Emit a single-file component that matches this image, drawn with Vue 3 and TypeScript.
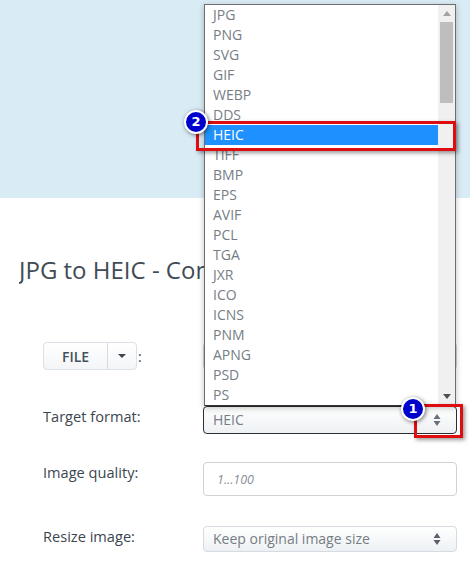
<script setup lang="ts">
const formats: string[] = ['JPG','PNG','SVG','GIF','WEBP','DDS','HEIC','TIFF','BMP','EPS','AVIF','PCL','TGA','JXR','ICO','ICNS','PNM','APNG','PSD','PS']
</script>

<template>
  <div class="page">
    <div class="hero"></div>
    <h1 class="title">JPG to HEIC - Convert</h1>
    <form class="form" @submit.prevent>
      <div class="row row-file">
        <div class="label-file">
          <div class="btn-group">
            <button type="button" class="btn-file">FILE</button>
            <button type="button" class="btn-caret"><span class="caret"></span></button>
          </div>
          <span class="colon">:</span>
        </div>
        <div class="file-box"></div>
      </div>
      <div class="row row-target">
        <label class="label">Target format:</label>
        <div class="select select-active">
          <span>HEIC</span>
          <svg class="updown" width="8" height="14" viewBox="0 0 8 14"><path d="M4 1 7.5 6H.5zM4 13 .5 8h7z" fill="#6b7179"/></svg>
        </div>
      </div>
      <div class="row row-quality">
        <label class="label">Image quality:</label>
        <div class="input"><em>1...100</em></div>
      </div>
      <div class="row row-resize">
        <label class="label">Resize image:</label>
        <div class="select">
          <span>Keep original image size</span>
          <svg class="updown" width="8" height="14" viewBox="0 0 8 14"><path d="M4 1 7.5 6H.5zM4 13 .5 8h7z" fill="#5b6169"/></svg>
        </div>
      </div>
    </form>

    <div class="dropdown">
      <ul class="options">
        <li v-for="f in formats" :key="f" :class="{ selected: f === 'HEIC' }">{{ f }}</li>
      </ul>
      <div class="scrollbar">
        <svg class="arrow" width="8" height="5" viewBox="0 0 8 5"><path d="M4 0 8 5H0z" fill="#a3a3a3"/></svg>
        <div class="track"><div class="thumb"></div></div>
        <svg class="arrow" width="8" height="5" viewBox="0 0 8 5"><path d="M0 0h8L4 5z" fill="#505050"/></svg>
      </div>
    </div>

    <div class="mark mark-option"></div>
    <div class="mark mark-arrow"></div>
    <div class="badge badge-two">2</div>
    <div class="badge badge-one">1</div>
  </div>
</template>

<style>
html, body { margin: 0; background: #fff; }
</style>

<style scoped>
.page {
  position: relative;
  width: 470px;
  height: 563px;
  overflow: hidden;
  background: #fff;
  font-family: "Open Sans", "Liberation Sans", sans-serif;
  color: #3d4650;
}
.hero { height: 198px; background: #d9ebf5; }
.title {
  margin: 55px 0 0 19px;
  width: 185px;
  overflow: hidden;
  font-size: 24px;
  line-height: 34px;
  font-weight: 400;
  color: #414b55;
  white-space: nowrap;
}
.form { margin: 0 13px 0 43px; padding-top: 55px; }
.row {
  display: grid;
  grid-template-columns: 160px 254px;
  align-items: center;
}
.row-file { height: 28px; }
.row-target { margin-top: 36px; height: 25px; }
.row-quality { margin-top: 31px; height: 33px; }
.row-resize { margin-top: 31px; height: 26px; }
.label { font-size: 14.6px; line-height: 20px; color: #3d4650; }
.row-target .label { padding-bottom: 8px; }
.row-quality .label { padding-bottom: 14px; }
.row-resize .label { padding-bottom: 6px; }
.label-file { display: flex; align-items: center; }
.btn-group {
  display: flex;
  height: 28px;
  box-sizing: border-box;
  border: 1px solid #dbe1e6;
  border-radius: 4px;
  background: linear-gradient(#fff, #f3f5f7);
}
.btn-file {
  width: 64px;
  border: 0;
  border-right: 1px solid #d5dbe0;
  background: none;
  padding: 0;
  font: 600 14px "Open Sans", sans-serif;
  color: #46505a;
}
.btn-caret {
  width: 28px;
  border: 0;
  padding: 0;
  background: none;
  display: flex;
  align-items: center;
  justify-content: center;
}
.caret {
  width: 0;
  height: 0;
  border-left: 4px solid transparent;
  border-right: 4px solid transparent;
  border-top: 4px solid #3d4650;
}
.colon { font-size: 14px; margin-left: 1px; color: #3d4650; }
.file-box {
  height: 28px;
  box-sizing: border-box;
  border: 1px solid #cfd5da;
  border-radius: 4px;
}
.select {
  box-sizing: border-box;
  height: 100%;
  display: flex;
  align-items: center;
  justify-content: space-between;
  padding: 0 15px 1px 9px;
  border: 1px solid #d5dbe0;
  border-radius: 4px;
  background: linear-gradient(#fff, #eef1f4);
  font-size: 14px;
  color: #767d85;
}
.select-active { border-color: #2b2f33; }
.input {
  box-sizing: border-box;
  height: 100%;
  display: flex;
  align-items: center;
  padding: 0 13px;
  border: 1px solid #ced3d8;
  border-radius: 4px;
  font-size: 12.5px;
  color: #8a9098;
}
.dropdown {
  position: absolute;
  left: 204px;
  top: 4px;
  width: 252px;
  height: 402px;
  box-sizing: border-box;
  display: flex;
  background: #fff;
  border: 1px solid #6d6d6d;
  border-bottom-color: #333;
  box-shadow: 0 2px 6px rgba(0, 0, 0, 0.25);
}
.options {
  flex: 1;
  margin: 0;
  padding: 0;
  list-style: none;
  font-size: 14px;
  color: #767d85;
}
.options li { height: 20px; line-height: 20px; padding-left: 8px; }
.options li.selected { background: #1e90ff; color: #fff; }
.scrollbar {
  width: 17px;
  display: flex;
  flex-direction: column;
  align-items: center;
  background: #f0f0f0;
}
.arrow { flex: none; margin: 6px 0; }
.track { flex: 1; width: 100%; }
.thumb { width: 13px; height: 81px; margin: 0 auto; background: #bebebe; }
.mark {
  position: absolute;
  box-sizing: border-box;
  border: 3px solid #dd0d10;
  box-shadow: 2px 2px 4px rgba(0, 0, 0, 0.4);
}
.mark-option { left: 196px; top: 121px; width: 260px; height: 30px; }
.mark-arrow { left: 414px; top: 404px; width: 49px; height: 34px; }
.badge {
  position: absolute;
  width: 20px;
  height: 20px;
  border: 2px solid #fff;
  border-radius: 50%;
  background: #0000cc;
  color: #fff;
  font: 700 13px/20px "DejaVu Sans", sans-serif;
  text-align: center;
  box-shadow: 1px 1px 4px rgba(0, 0, 0, 0.55);
}
.badge-two { left: 184px; top: 110px; }
.badge-one { left: 401px; top: 397px; }
</style>
